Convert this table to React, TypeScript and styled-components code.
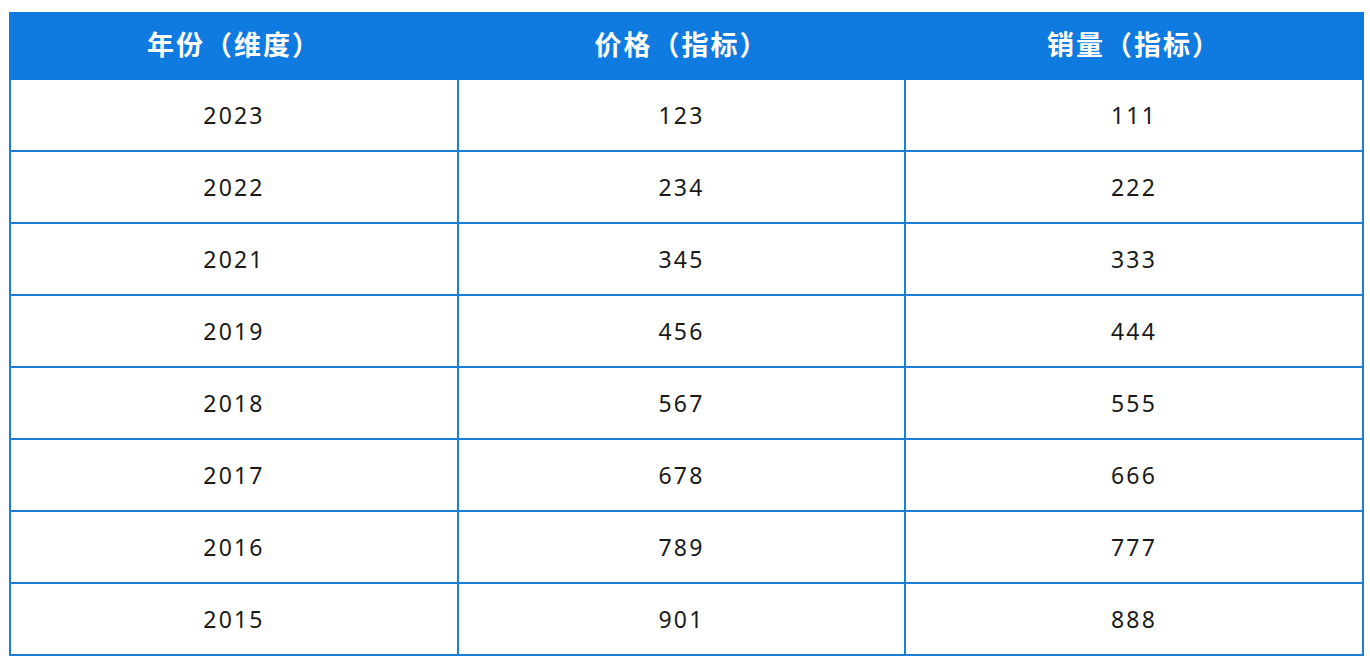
import React from 'react';
import styled, { createGlobalStyle } from 'styled-components';

const GlobalStyle = createGlobalStyle`
  html, body {
    margin: 0;
    padding: 0;
    background: #ffffff;
  }
  body {
    font-family: "Noto Sans", "Noto Sans CJK SC", sans-serif;
  }
`;

const Page = styled.div`
  padding: 12px 8px 0 9px;
`;

const Table = styled.table`
  border-collapse: collapse;
  table-layout: fixed;
  width: 1353px;
  border: 2px solid #1a7fd6;
`;

const HeadCell = styled.th<{ $w: number }>`
  width: ${({ $w }) => $w}px;
  height: 58px;
  padding: 0 0 6px;
  background: #0f7ae0;
  border: 2px solid #0f7ae0;
  color: #ffffff;
  font-family: "Noto Sans CJK SC", sans-serif;
  font-size: 27px;
  font-weight: 700;
  line-height: 1;
  letter-spacing: 2px;
  text-align: center;
  vertical-align: middle;
  text-spacing-trim: space-all;
  font-feature-settings: "chws" 0, "halt" 0;
`;

const Cell = styled.td`
  height: 70px;
  padding: 0;
  border: 2px solid #1a7fd6;
  color: #1a1a1a;
  font-family: "Noto Sans", "Noto Sans CJK SC", sans-serif;
  font-size: 23px;
  letter-spacing: 2.2px;
  text-align: center;
  vertical-align: middle;
`;

const rows = [
  ['2023', '123', '111'],
  ['2022', '234', '222'],
  ['2021', '345', '333'],
  ['2019', '456', '444'],
  ['2018', '567', '555'],
  ['2017', '678', '666'],
  ['2016', '789', '777'],
  ['2015', '901', '888'],
];

export default function App() {
  return (
    <Page>
      <GlobalStyle />
      <Table>
        <thead>
          <tr>
            <HeadCell $w={446}>年份（维度）</HeadCell>
            <HeadCell $w={445}>价格（指标）</HeadCell>
            <HeadCell $w={456}>销量（指标）</HeadCell>
          </tr>
        </thead>
        <tbody>
          {rows.map(r => (
            <tr key={r[0]}>
              {r.map((v, i) => (
                <Cell key={i}>{v}</Cell>
              ))}
            </tr>
          ))}
        </tbody>
      </Table>
    </Page>
  );
}
